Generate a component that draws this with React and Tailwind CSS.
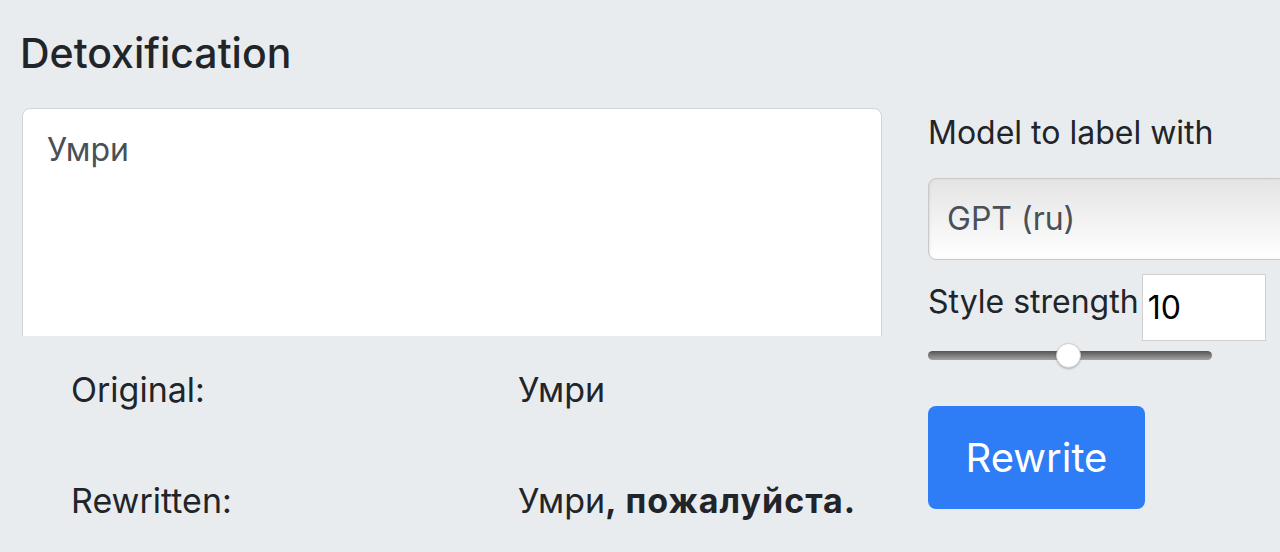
import { useState } from "react";

export default function App() {
  const [text, setText] = useState("Умри");
  const [strength, setStrength] = useState(10);

  return (
    <div className="min-h-screen bg-[#e9ecef] font-['Inter',sans-serif] text-[#212529] overflow-hidden">
      {/* Header */}
      <h1 className="pl-[20px] pt-[29px] text-[41px] leading-[48px] font-medium">Detoxification</h1>

      <div className="flex gap-[46px] mt-[31px]">
        {/* Left: input + results */}
        <div className="w-[860px] ml-[22px] shrink-0">
          <div className="h-[228px] overflow-hidden">
            <textarea
              value={text}
              onChange={(e) => setText(e.target.value)}
              className="w-full h-[260px] resize-none bg-white border border-[#ced4da] rounded-[8px] px-[24px] pt-[17px] pb-[12px] text-[32px] leading-[48px] text-[#495057] outline-none"
            />
          </div>

          <div className="grid grid-cols-[447px_1fr] pl-[49px] mt-[34px] gap-y-[71px] text-[34px] leading-[40px]">
            <div>Original:</div>
            <div>Умри</div>
            <div>Rewritten:</div>
            <div>
              Умри<span className="font-bold tracking-[1px]">, пожалуйста.</span>
            </div>
          </div>
        </div>

        {/* Right: controls */}
        <div className="flex-1 pt-[5px] text-[32px] leading-[40px]">
          <div>Model to label with</div>
          <div className="mt-[25px] h-[82px] w-[420px] flex items-center pl-[18px] rounded-[8px] border border-[#c9c9c9] bg-gradient-to-b from-[#e4e4e4] to-white shadow-[inset_1px_0_2px_rgba(0,0,0,0.08)] text-[#495057]">
            GPT (ru)
          </div>

          <div className="flex items-start mt-[14px]">
            <div className="mt-[8px]">Style strength</div>
            <input
              type="text"
              value={strength}
              onChange={(e) => setStrength(e.target.value)}
              className="ml-[3px] w-[124px] h-[67px] bg-white border border-[#d0d0d0] px-[5px] text-[32px] text-black outline-none"
            />
          </div>

          <div className="relative w-[284px] h-[9px] mt-[10px] rounded-full bg-gradient-to-b from-[#555555] to-[#a5a5a5]">
            <div className="absolute left-[128px] top-[-8px] w-[25px] h-[25px] rounded-full bg-white border border-[#cfcfcf] shadow-[0_1px_2px_rgba(0,0,0,0.25)]"></div>
          </div>

          <button className="mt-[46px] w-[217px] h-[103px] rounded-[8px] bg-[#2e7cf6] text-white text-[40px] leading-none">
            Rewrite
          </button>
        </div>
      </div>
    </div>
  );
}
